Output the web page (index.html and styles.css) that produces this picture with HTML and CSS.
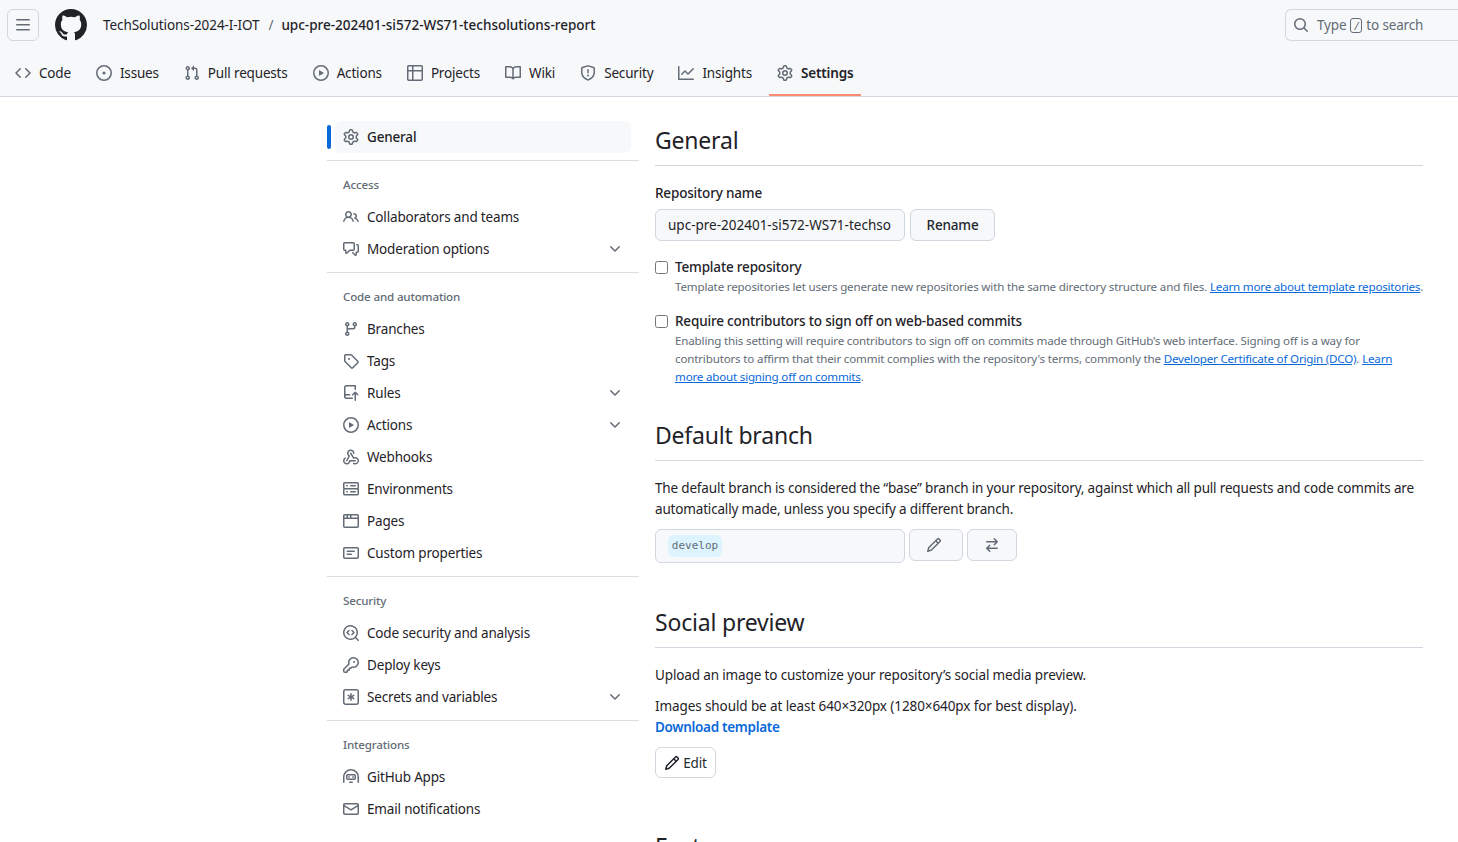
FILE: index.html
```html
<!DOCTYPE html>
<html lang="en">
<head>
<meta charset="utf-8">
<title>General settings</title>
<link rel="stylesheet" href="styles.css">
</head>
<body>
<svg class="defs" aria-hidden="true">
<symbol id="mark" viewBox="0 0 16 16"><path d="M8 0c4.42 0 8 3.58 8 8a8.013 8.013 0 0 1-5.45 7.59c-.4.08-.55-.17-.55-.38 0-.27.01-1.13.01-2.2 0-.75-.25-1.23-.54-1.48 1.78-.2 3.65-.88 3.65-3.95 0-.88-.31-1.59-.82-2.15.08-.2.36-1.02-.08-2.12 0 0-.67-.22-2.2.82-.64-.18-1.32-.27-2-.27-.68 0-1.36.09-2 .27-1.53-1.03-2.2-.82-2.2-.82-.44 1.1-.16 1.92-.08 2.12-.51.56-.82 1.28-.82 2.15 0 3.06 1.86 3.75 3.64 3.95-.23.2-.44.55-.51 1.07-.46.21-1.61.55-2.33-.66-.15-.24-.6-.83-1.23-.82-.67.01-.27.38.01.53.34.19.73.9.82 1.13.16.45.68 1.31 2.69.94 0 .67.01 1.3.01 1.49 0 .21-.15.45-.55.38A7.995 7.995 0 0 1 0 8c0-4.42 3.58-8 8-8Z"/></symbol>
<symbol id="bars" viewBox="0 0 16 16"><path d="M1 2.75A.75.75 0 0 1 1.75 2h12.5a.75.75 0 0 1 0 1.5H1.75A.75.75 0 0 1 1 2.75Zm0 5A.75.75 0 0 1 1.75 7h12.5a.75.75 0 0 1 0 1.5H1.75A.75.75 0 0 1 1 7.75ZM1.75 12h12.5a.75.75 0 0 1 0 1.5H1.75a.75.75 0 0 1 0-1.5Z"/></symbol>
<symbol id="code" viewBox="0 0 16 16"><path d="m11.28 3.22 4.25 4.25a.75.75 0 0 1 0 1.06l-4.25 4.25a.749.749 0 0 1-1.275-.326.749.749 0 0 1 .215-.734L13.94 8l-3.72-3.72a.749.749 0 0 1 .326-1.275.749.749 0 0 1 .734.215Zm-6.56 0a.751.751 0 0 1 1.042.018.751.751 0 0 1 .018 1.042L2.06 8l3.72 3.72a.749.749 0 0 1-.326 1.275.749.749 0 0 1-.734-.215L.47 8.53a.75.75 0 0 1 0-1.06Z"/></symbol>
<symbol id="issue" viewBox="0 0 16 16"><path d="M8 9.5a1.5 1.5 0 1 0 0-3 1.5 1.5 0 0 0 0 3Z"/><path d="M8 0a8 8 0 1 1 0 16A8 8 0 0 1 8 0ZM1.5 8a6.5 6.5 0 1 0 13 0 6.5 6.5 0 0 0-13 0Z"/></symbol>
<symbol id="pr" viewBox="0 0 16 16"><path d="M1.5 3.25a2.25 2.25 0 1 1 3 2.122v5.256a2.251 2.251 0 1 1-1.5 0V5.372A2.25 2.25 0 0 1 1.5 3.25Zm5.677-.177L9.573.677A.25.25 0 0 1 10 .854V2.5h1A2.5 2.5 0 0 1 13.5 5v5.628a2.251 2.251 0 1 1-1.5 0V5a1 1 0 0 0-1-1h-1v1.646a.25.25 0 0 1-.427.177L7.177 3.427a.25.25 0 0 1 0-.354ZM3.75 2.5a.75.75 0 1 0 0 1.5.75.75 0 0 0 0-1.5Zm0 9.5a.75.75 0 1 0 0 1.5.75.75 0 0 0 0-1.5Zm8.25.75a.75.75 0 1 0 1.5 0 .75.75 0 0 0-1.5 0Z"/></symbol>
<symbol id="play" viewBox="0 0 16 16"><path d="M8 0a8 8 0 1 1 0 16A8 8 0 0 1 8 0ZM1.5 8a6.5 6.5 0 1 0 13 0 6.5 6.5 0 0 0-13 0Zm4.879-2.773 4.264 2.559a.25.25 0 0 1 0 .428l-4.264 2.559A.25.25 0 0 1 6 10.559V5.442a.25.25 0 0 1 .379-.215Z"/></symbol>
<symbol id="table" viewBox="0 0 16 16"><path d="M0 1.75C0 .784.784 0 1.75 0h12.5C15.216 0 16 .784 16 1.75v12.5A1.75 1.75 0 0 1 14.25 16H1.75A1.75 1.75 0 0 1 0 14.25ZM6.5 6.5v8h7.75a.25.25 0 0 0 .25-.25V6.5Zm8-1.5V1.75a.25.25 0 0 0-.25-.25H6.5V5Zm-13 1.5v7.75c0 .138.112.25.25.25H5v-8ZM5 5V1.5H1.75a.25.25 0 0 0-.25.25V5Z"/></symbol>
<symbol id="book" viewBox="0 0 16 16"><path d="M0 1.75A.75.75 0 0 1 .75 1h4.253c1.227 0 2.317.59 3 1.501A3.743 3.743 0 0 1 11.006 1h4.245a.75.75 0 0 1 .75.75v10.5a.75.75 0 0 1-.75.75h-4.507a2.25 2.25 0 0 0-1.591.659l-.622.621a.75.75 0 0 1-1.06 0l-.622-.621A2.25 2.25 0 0 0 5.258 13H.75a.75.75 0 0 1-.75-.75Zm7.251 10.324.004-5.073-.002-2.253A2.25 2.25 0 0 0 5.003 2.5H1.5v9h3.757a3.75 3.75 0 0 1 1.994.574ZM8.755 4.75l-.004 7.322a3.752 3.752 0 0 1 1.992-.572H14.5v-9h-3.495a2.25 2.25 0 0 0-2.25 2.25Z"/></symbol>
<symbol id="shield" viewBox="0 0 16 16"><path d="M7.467.133a1.748 1.748 0 0 1 1.066 0l5.25 1.68A1.75 1.75 0 0 1 15 3.48V7c0 1.566-.32 3.182-1.303 4.682-.983 1.498-2.585 2.813-5.032 3.855a1.697 1.697 0 0 1-1.33 0c-2.447-1.042-4.049-2.357-5.032-3.855C1.32 10.182 1 8.566 1 7V3.48a1.75 1.75 0 0 1 1.217-1.667Zm.61 1.429a.25.25 0 0 0-.153 0l-5.25 1.68a.25.25 0 0 0-.174.238V7c0 1.358.275 2.666 1.057 3.86.784 1.194 2.121 2.34 4.366 3.297a.196.196 0 0 0 .154 0c2.245-.956 3.582-2.104 4.366-3.298C13.225 9.666 13.5 8.36 13.5 7V3.48a.251.251 0 0 0-.174-.237l-5.25-1.68ZM8.75 4.75v3a.75.75 0 0 1-1.5 0v-3a.75.75 0 0 1 1.5 0ZM9 10.5a1 1 0 1 1-2 0 1 1 0 0 1 2 0Z"/></symbol>
<symbol id="graph" viewBox="0 0 16 16"><path d="M1.5 1.75V13.5h13.75a.75.75 0 0 1 0 1.5H.75a.75.75 0 0 1-.75-.75V1.75a.75.75 0 0 1 1.5 0Zm14.28 2.53-5.25 5.25a.75.75 0 0 1-1.06 0L7 7.06 4.28 9.78a.751.751 0 0 1-1.042-.018.751.751 0 0 1-.018-1.042l3.25-3.25a.75.75 0 0 1 1.06 0L10 7.94l4.72-4.72a.751.751 0 0 1 1.042.018.751.751 0 0 1 .018 1.042Z"/></symbol>
<symbol id="gear" viewBox="0 0 16 16"><path d="M8 0a8.2 8.2 0 0 1 .701.031C9.444.095 9.99.645 10.16 1.29l.288 1.107c.018.066.079.158.212.224.231.114.454.243.668.386.123.082.233.09.299.071l1.103-.303c.644-.176 1.392.021 1.82.63.27.385.506.792.704 1.218.315.675.111 1.422-.364 1.891l-.814.806c-.049.048-.098.147-.088.294.016.257.016.515 0 .772-.01.147.038.246.088.294l.814.806c.475.469.679 1.216.364 1.891a7.977 7.977 0 0 1-.704 1.217c-.428.61-1.176.807-1.82.63l-1.102-.302c-.067-.019-.177-.011-.3.071a5.909 5.909 0 0 1-.668.386c-.133.066-.194.158-.211.224l-.29 1.106c-.168.646-.715 1.196-1.458 1.26a8.006 8.006 0 0 1-1.402 0c-.743-.064-1.289-.614-1.458-1.26l-.289-1.106c-.018-.066-.079-.158-.212-.224a5.738 5.738 0 0 1-.668-.386c-.123-.082-.233-.09-.299-.071l-1.103.303c-.644.176-1.392-.021-1.82-.63a8.12 8.12 0 0 1-.704-1.218c-.315-.675-.111-1.422.363-1.891l.815-.806c.05-.048.098-.147.088-.294a6.214 6.214 0 0 1 0-.772c.01-.147-.038-.246-.088-.294l-.815-.806C.635 6.045.431 5.298.746 4.623a7.92 7.92 0 0 1 .704-1.217c.428-.61 1.176-.807 1.82-.63l1.102.302c.067.019.177.011.3-.071.214-.143.437-.272.668-.386.133-.066.194-.158.211-.224l.29-1.106C6.009.645 6.556.095 7.299.03 7.53.01 7.764 0 8 0Zm-.571 1.525c-.036.003-.108.036-.137.146l-.289 1.105c-.147.561-.549.967-.998 1.189-.173.086-.34.183-.5.29-.417.278-.97.423-1.529.27l-1.103-.303c-.109-.03-.175.016-.195.045-.22.312-.412.644-.573.99-.014.031-.021.11.059.19l.815.806c.411.406.562.957.53 1.456a4.709 4.709 0 0 0 0 .582c.032.499-.119 1.05-.53 1.456l-.815.806c-.081.08-.073.159-.059.19.162.346.353.677.573.989.02.03.085.076.195.046l1.102-.303c.56-.153 1.113-.008 1.53.27.161.107.328.204.501.29.447.222.85.629.997 1.189l.289 1.105c.029.109.101.143.137.146a6.6 6.6 0 0 0 1.142 0c.036-.003.108-.036.137-.146l.289-1.105c.147-.561.549-.967.998-1.189.173-.086.34-.183.5-.29.417-.278.97-.423 1.529-.27l1.103.303c.109.029.175-.016.195-.045.22-.313.411-.644.573-.99.014-.031.021-.11-.059-.19l-.815-.806c-.411-.406-.562-.957-.53-1.456a4.709 4.709 0 0 0 0-.582c-.032-.499.119-1.05.53-1.456l.815-.806c.081-.08.073-.159.059-.19a6.464 6.464 0 0 0-.573-.989c-.02-.03-.085-.076-.195-.046l-1.102.303c-.56.153-1.113.008-1.53-.27a4.44 4.44 0 0 0-.501-.29c-.447-.222-.85-.629-.997-1.189l-.289-1.105c-.029-.11-.101-.143-.137-.146a6.6 6.6 0 0 0-1.142 0ZM11 8a3 3 0 1 1-6 0 3 3 0 0 1 6 0ZM9.5 8a1.5 1.5 0 1 0-3.001.001A1.5 1.5 0 0 0 9.5 8Z"/></symbol>
<symbol id="people" viewBox="0 0 16 16"><path d="M2 5.5a3.5 3.5 0 1 1 5.898 2.549 5.508 5.508 0 0 1 3.034 4.084.75.75 0 1 1-1.482.235 4 4 0 0 0-7.9 0 .75.75 0 0 1-1.482-.236A5.507 5.507 0 0 1 3.102 8.05 3.493 3.493 0 0 1 2 5.5ZM11 4a3.001 3.001 0 0 1 2.22 5.018 5.01 5.01 0 0 1 2.56 3.012.749.749 0 0 1-.885.954.752.752 0 0 1-.549-.514 3.507 3.507 0 0 0-2.522-2.372.75.75 0 0 1-.574-.73v-.352a.75.75 0 0 1 .416-.672A1.5 1.5 0 0 0 11 5.5.75.75 0 0 1 11 4Zm-5.5-.5a2 2 0 1 0-.001 3.999A2 2 0 0 0 5.5 3.5Z"/></symbol>
<symbol id="discussion" viewBox="0 0 16 16"><path d="M1.75 1h8.5c.966 0 1.75.784 1.75 1.75v5.5A1.75 1.75 0 0 1 10.25 10H7.061l-2.574 2.573A1.458 1.458 0 0 1 2 11.543V10h-.25A1.75 1.75 0 0 1 0 8.25v-5.5C0 1.784.784 1 1.75 1ZM1.5 2.75v5.5c0 .138.112.25.25.25h1a.75.75 0 0 1 .75.75v2.19l2.72-2.72a.749.749 0 0 1 .53-.22h3.5a.25.25 0 0 0 .25-.25v-5.5a.25.25 0 0 0-.25-.25h-8.5a.25.25 0 0 0-.25.25Zm13 2a.25.25 0 0 0-.25-.25h-.5a.75.75 0 0 1 0-1.5h.5c.966 0 1.75.784 1.75 1.75v5.5A1.75 1.75 0 0 1 14.25 12H14v1.543a1.458 1.458 0 0 1-2.487 1.03L9.22 12.28a.749.749 0 0 1 .326-1.275.749.749 0 0 1 .734.215l2.22 2.22v-2.19a.75.75 0 0 1 .75-.75h1a.25.25 0 0 0 .25-.25Z"/></symbol>
<symbol id="chev" viewBox="0 0 16 16"><path d="M12.78 5.22a.749.749 0 0 1 0 1.06l-4.25 4.25a.749.749 0 0 1-1.06 0L3.22 6.28a.749.749 0 1 1 1.06-1.06L8 8.939l3.72-3.719a.749.749 0 0 1 1.06 0Z"/></symbol>
<symbol id="branch" viewBox="0 0 16 16"><path d="M9.5 3.25a2.25 2.25 0 1 1 3 2.122V6A2.5 2.5 0 0 1 10 8.5H6a1 1 0 0 0-1 1v1.128a2.251 2.251 0 1 1-1.5 0V5.372a2.25 2.25 0 1 1 1.5 0v1.836A2.493 2.493 0 0 1 6 7h4a1 1 0 0 0 1-1v-.628A2.25 2.25 0 0 1 9.5 3.25Zm-6 0a.75.75 0 1 0 1.5 0 .75.75 0 0 0-1.5 0Zm8.25-.75a.75.75 0 1 0 0 1.5.75.75 0 0 0 0-1.5ZM4.25 12a.75.75 0 1 0 0 1.5.75.75 0 0 0 0-1.5Z"/></symbol>
<symbol id="tag" viewBox="0 0 16 16"><path d="M1 7.775V2.75C1 1.784 1.784 1 2.75 1h5.025c.464 0 .91.184 1.238.513l6.25 6.25a1.75 1.75 0 0 1 0 2.474l-5.026 5.026a1.75 1.75 0 0 1-2.474 0l-6.25-6.25A1.752 1.752 0 0 1 1 7.775Zm1.5 0c0 .066.026.13.073.177l6.25 6.25a.25.25 0 0 0 .354 0l5.025-5.025a.25.25 0 0 0 0-.354l-6.25-6.25a.25.25 0 0 0-.177-.073H2.75a.25.25 0 0 0-.25.25ZM6 5a1 1 0 1 1 0 2 1 1 0 0 1 0-2Z"/></symbol>
<symbol id="push" viewBox="0 0 16 16"><path d="M1 2.5A2.5 2.5 0 0 1 3.5 0h8.75a.75.75 0 0 1 .75.75v3.5a.75.75 0 0 1-1.5 0V1.5h-8a1 1 0 0 0-1 1v6.708A2.493 2.493 0 0 1 3.5 9h3.25a.75.75 0 0 1 0 1.5H3.5a1 1 0 0 0 0 2h5.75a.75.75 0 0 1 0 1.5H3.5A2.5 2.5 0 0 1 1 11.5Zm13.23 7.79h-.001l-1.224-1.224v6.184a.75.75 0 0 1-1.5 0V9.066L10.28 10.29a.75.75 0 0 1-1.06-1.061l2.505-2.504a.75.75 0 0 1 1.06 0L15.29 9.23a.751.751 0 0 1-.018 1.042.751.751 0 0 1-1.042.018Z"/></symbol>
<symbol id="webhook" viewBox="0 0 16 16"><path d="M5.5 4.25a2.25 2.25 0 0 1 4.5 0 .75.75 0 0 0 1.5 0 3.75 3.75 0 1 0-6.14 2.889l-2.272 4.258a.75.75 0 0 0 1.324.706L7 7.25a.75.75 0 0 0-.309-1.015A2.25 2.25 0 0 1 5.5 4.25Z"/><path d="M7.364 3.607a.75.75 0 0 1 1.03.257l2.608 4.349a3.75 3.75 0 1 1-.628 6.785.75.75 0 0 1 .752-1.299 2.25 2.25 0 1 0-.033-3.88.75.75 0 0 1-1.03-.256L7.107 4.636a.75.75 0 0 1 .257-1.03Z"/><path d="M2.9 8.776A.75.75 0 0 1 2.625 9.8 2.25 2.25 0 1 0 6 11.75a.75.75 0 0 1 .75-.751h5.5a.75.75 0 0 1 0 1.5H7.425a3.751 3.751 0 1 1-5.55-3.998.75.75 0 0 1 1.024.274Z"/></symbol>
<symbol id="server" viewBox="0 0 16 16"><path d="M1.75 1h12.5c.966 0 1.75.784 1.75 1.75v4c0 .372-.116.717-.314 1 .198.283.314.628.314 1v4a1.75 1.75 0 0 1-1.75 1.75H1.75A1.75 1.75 0 0 1 0 12.75v-4c0-.372.116-.717.314-1A1.739 1.739 0 0 1 0 6.75v-4C0 1.784.784 1 1.75 1ZM1.5 2.75v4c0 .138.112.25.25.25h12.5a.25.25 0 0 0 .25-.25v-4a.25.25 0 0 0-.25-.25H1.75a.25.25 0 0 0-.25.25Zm.25 5.75a.25.25 0 0 0-.25.25v4c0 .138.112.25.25.25h12.5a.25.25 0 0 0 .25-.25v-4a.25.25 0 0 0-.25-.25ZM7 4.75A.75.75 0 0 1 7.75 4h4.5a.75.75 0 0 1 0 1.5h-4.5A.75.75 0 0 1 7 4.75ZM7.75 10h4.5a.75.75 0 0 1 0 1.5h-4.5a.75.75 0 0 1 0-1.5ZM3 4.75A.75.75 0 0 1 3.75 4h.5a.75.75 0 0 1 0 1.5h-.5A.75.75 0 0 1 3 4.75ZM3.75 10h.5a.75.75 0 0 1 0 1.5h-.5a.75.75 0 0 1 0-1.5Z"/></symbol>
<symbol id="browser" viewBox="0 0 16 16"><path d="M0 2.75C0 1.784.784 1 1.75 1h12.5c.966 0 1.75.784 1.75 1.75v10.5A1.75 1.75 0 0 1 14.25 15H1.75A1.75 1.75 0 0 1 0 13.25ZM14.5 6h-13v7.25c0 .138.112.25.25.25h12.5a.25.25 0 0 0 .25-.25Zm-6-3.5v2h6v-1.75a.25.25 0 0 0-.25-.25ZM5 2.5v2h2v-2Zm-3.25 0a.25.25 0 0 0-.25.25V4.5h2v-2Z"/></symbol>
<symbol id="note" viewBox="0 0 16 16"><path d="M0 3.75C0 2.784.784 2 1.75 2h12.5c.966 0 1.75.784 1.75 1.75v8.5A1.75 1.75 0 0 1 14.25 14H1.75A1.75 1.75 0 0 1 0 12.25Zm1.75-.25a.25.25 0 0 0-.25.25v8.5c0 .138.112.25.25.25h12.5a.25.25 0 0 0 .25-.25v-8.5a.25.25 0 0 0-.25-.25ZM3.5 6.25a.75.75 0 0 1 .75-.75h7a.75.75 0 0 1 0 1.5h-7a.75.75 0 0 1-.75-.75Zm.75 2.25h4a.75.75 0 0 1 0 1.5h-4a.75.75 0 0 1 0-1.5Z"/></symbol>
<symbol id="codescan" viewBox="0 0 16 16"><path d="M8.47 4.97a.75.75 0 0 0 0 1.06L9.94 7.5 8.47 8.97a.75.75 0 1 0 1.06 1.06l2-2a.75.75 0 0 0 0-1.06l-2-2a.75.75 0 0 0-1.06 0ZM6.53 6.03a.75.75 0 0 0-1.06-1.06l-2 2a.75.75 0 0 0 0 1.06l2 2a.75.75 0 1 0 1.06-1.06L5.06 7.5l1.47-1.47Z"/><path d="M12.246 13.307a7.501 7.501 0 1 1 1.06-1.06l2.474 2.473a.749.749 0 0 1-.326 1.275.749.749 0 0 1-.734-.215ZM1.5 7.5a6.002 6.002 0 0 0 3.608 5.504 6.002 6.002 0 0 0 6.486-1.117.748.748 0 0 1 .292-.293A6 6 0 1 0 1.5 7.5Z"/></symbol>
<symbol id="key" viewBox="0 0 16 16"><path d="M10.5 0a5.499 5.499 0 1 1-1.288 10.848l-.932.932a.749.749 0 0 1-.53.22H7v.75a.749.749 0 0 1-.22.53l-.5.5a.749.749 0 0 1-.53.22H5v.75a.749.749 0 0 1-.22.53l-.5.5a.749.749 0 0 1-.53.22h-2A1.75 1.75 0 0 1 0 14.25v-2c0-.199.079-.389.22-.53l4.932-4.932A5.5 5.5 0 0 1 10.5 0Zm-4 5.5c-.001.431.069.86.205 1.269a.75.75 0 0 1-.181.768L1.5 12.56v1.69c0 .138.112.25.25.25h1.69l.06-.06v-1.19a.75.75 0 0 1 .75-.75h1.19l.06-.06v-1.19a.75.75 0 0 1 .75-.75h1.19l1.023-1.025a.75.75 0 0 1 .768-.18A4 4 0 1 0 6.5 5.5ZM11 6a1 1 0 1 1 0-2 1 1 0 0 1 0 2Z"/></symbol>
<symbol id="asterisk" viewBox="0 0 16 16"><path d="M0 2.75A2.75 2.75 0 0 1 2.75 0h10.5A2.75 2.75 0 0 1 16 2.75v10.5A2.75 2.75 0 0 1 13.25 16H2.75A2.75 2.75 0 0 1 0 13.25Zm2.75-1.25c-.69 0-1.25.56-1.25 1.25v10.5c0 .69.56 1.25 1.25 1.25h10.5c.69 0 1.25-.56 1.25-1.25V2.75c0-.69-.56-1.25-1.25-1.25ZM8 4a.75.75 0 0 1 .75.75V6.7l1.69-.975a.75.75 0 0 1 .75 1.3L9.5 8l1.69.976a.75.75 0 0 1-.75 1.298L8.75 9.299v1.951a.75.75 0 0 1-1.5 0V9.3l-1.69.975a.751.751 0 0 1-.75-1.3L6.5 8l-1.69-.975a.75.75 0 0 1 .75-1.3l1.69.976V4.75A.75.75 0 0 1 8 4Z"/></symbol>
<symbol id="hubot" viewBox="0 0 16 16"><path d="M0 8a8 8 0 0 1 16 0v5.25a.75.75 0 0 1-1.5 0V8a6.5 6.5 0 1 0-13 0v5.25a.75.75 0 0 1-1.5 0Z"/><path d="M4.75 5h6.5C12.216 5 13 5.784 13 6.75v2.5A1.75 1.75 0 0 1 11.25 11h-6.5A1.75 1.75 0 0 1 3 9.25v-2.5C3 5.784 3.784 5 4.75 5Zm0 1.5a.25.25 0 0 0-.25.25v2.5c0 .138.112.25.25.25h6.5a.25.25 0 0 0 .25-.25v-2.5a.25.25 0 0 0-.25-.25ZM6 7a.75.75 0 0 1 .75.75v.5a.75.75 0 0 1-1.5 0v-.5A.75.75 0 0 1 6 7Zm4 0a.75.75 0 0 1 .75.75v.5a.75.75 0 0 1-1.5 0v-.5A.75.75 0 0 1 10 7ZM6.75 12.5h2.5a.75.75 0 0 1 0 1.5h-2.5a.75.75 0 0 1 0-1.5Z"/></symbol>
<symbol id="mail" viewBox="0 0 16 16"><path d="M1.75 2h12.5c.966 0 1.75.784 1.75 1.75v8.5A1.75 1.75 0 0 1 14.25 14H1.75A1.75 1.75 0 0 1 0 12.25v-8.5C0 2.784.784 2 1.75 2ZM1.5 12.251c0 .138.112.25.25.25h12.5a.25.25 0 0 0 .25-.25V5.809L8.38 9.397a.75.75 0 0 1-.76 0L1.5 5.809v6.442Zm13-8.181v-.32a.25.25 0 0 0-.25-.25H1.75a.25.25 0 0 0-.25.25v.32L8 7.88Z"/></symbol>
<symbol id="pencil" viewBox="0 0 16 16"><path d="M11.013 1.427a1.75 1.75 0 0 1 2.474 0l1.086 1.086a1.75 1.75 0 0 1 0 2.474l-8.61 8.61c-.21.21-.47.364-.756.445l-3.251.93a.75.75 0 0 1-.927-.928l.929-3.25c.081-.286.235-.547.445-.758l8.61-8.61Zm.176 4.823L9.75 4.81l-6.286 6.287a.253.253 0 0 0-.064.108l-.558 1.953 1.953-.558a.253.253 0 0 0 .108-.064Zm1.238-3.763a.25.25 0 0 0-.354 0L10.811 3.75l1.439 1.44 1.263-1.263a.25.25 0 0 0 0-.354Z"/></symbol>
<symbol id="switch" viewBox="0 0 16 16"><path d="M5.22 14.78a.75.75 0 0 0 1.06-1.06L4.56 12h8.69a.75.75 0 0 0 0-1.5H4.56l1.72-1.72a.75.75 0 0 0-1.06-1.06l-3 3a.75.75 0 0 0 0 1.06l3 3Zm5.56-6.5a.75.75 0 1 1-1.06-1.06l1.72-1.72H2.75a.75.75 0 0 1 0-1.5h8.69L9.72 2.28a.75.75 0 0 1 1.06-1.06l3 3a.75.75 0 0 1 0 1.06l-3 3Z"/></symbol>
<symbol id="search" viewBox="0 0 16 16"><path d="M10.68 11.74a6 6 0 0 1-7.922-8.982 6 6 0 0 1 8.982 7.922l3.04 3.04a.749.749 0 0 1-.326 1.275.749.749 0 0 1-.734-.215ZM11.5 7a4.499 4.499 0 1 0-8.997 0A4.499 4.499 0 0 0 11.5 7Z"/></symbol>
</svg>

<header class="header">
  <div class="topbar">
    <button class="menu-btn"><svg class="oi"><use href="#bars"/></svg></button>
    <svg class="logo"><use href="#mark"/></svg>
    <a class="crumb">TechSolutions-2024-I-IOT</a>
    <span class="crumb-sep">/</span>
    <a class="crumb crumb-repo">upc-pre-202401-si572-WS71-techsolutions-report</a>
    <div class="search">
      <svg class="oi"><use href="#search"/></svg>
      <span class="search-text">Type <kbd class="slash">/</kbd> to search</span>
    </div>
  </div>
  <nav class="tabs">
    <a class="tab"><svg class="oi"><use href="#code"/></svg>Code</a>
    <a class="tab"><svg class="oi"><use href="#issue"/></svg>Issues</a>
    <a class="tab"><svg class="oi"><use href="#pr"/></svg>Pull requests</a>
    <a class="tab"><svg class="oi"><use href="#play"/></svg>Actions</a>
    <a class="tab"><svg class="oi"><use href="#table"/></svg>Projects</a>
    <a class="tab"><svg class="oi"><use href="#book"/></svg>Wiki</a>
    <a class="tab"><svg class="oi"><use href="#shield"/></svg>Security</a>
    <a class="tab"><svg class="oi"><use href="#graph"/></svg>Insights</a>
    <a class="tab tab-active"><svg class="oi"><use href="#gear"/></svg>Settings</a>
  </nav>
</header>

<div class="page">
  <aside class="side">
    <a class="item item-active"><svg class="oi"><use href="#gear"/></svg>General</a>
    <div class="group">
      <h3 class="group-title">Access</h3>
      <a class="item"><svg class="oi"><use href="#people"/></svg>Collaborators and teams</a>
      <a class="item"><svg class="oi"><use href="#discussion"/></svg>Moderation options<svg class="oi chev"><use href="#chev"/></svg></a>
    </div>
    <div class="group">
      <h3 class="group-title">Code and automation</h3>
      <a class="item"><svg class="oi"><use href="#branch"/></svg>Branches</a>
      <a class="item"><svg class="oi"><use href="#tag"/></svg>Tags</a>
      <a class="item"><svg class="oi"><use href="#push"/></svg>Rules<svg class="oi chev"><use href="#chev"/></svg></a>
      <a class="item"><svg class="oi"><use href="#play"/></svg>Actions<svg class="oi chev"><use href="#chev"/></svg></a>
      <a class="item"><svg class="oi"><use href="#webhook"/></svg>Webhooks</a>
      <a class="item"><svg class="oi"><use href="#server"/></svg>Environments</a>
      <a class="item"><svg class="oi"><use href="#browser"/></svg>Pages</a>
      <a class="item"><svg class="oi"><use href="#note"/></svg>Custom properties</a>
    </div>
    <div class="group">
      <h3 class="group-title">Security</h3>
      <a class="item"><svg class="oi"><use href="#codescan"/></svg>Code security and analysis</a>
      <a class="item"><svg class="oi"><use href="#key"/></svg>Deploy keys</a>
      <a class="item"><svg class="oi"><use href="#asterisk"/></svg>Secrets and variables<svg class="oi chev"><use href="#chev"/></svg></a>
    </div>
    <div class="group">
      <h3 class="group-title">Integrations</h3>
      <a class="item"><svg class="oi"><use href="#hubot"/></svg>GitHub Apps</a>
      <a class="item"><svg class="oi"><use href="#mail"/></svg>Email notifications</a>
    </div>
  </aside>

  <main class="main">
    <h2 class="subhead">General</h2>
    <label class="label">Repository name</label>
    <div class="name-row">
      <div class="field">upc-pre-202401-si572-WS71-techso</div>
      <button class="btn btn-rename">Rename</button>
    </div>
    <div class="check check-first">
      <input type="checkbox" class="box">
      <div>
        <div class="check-title">Template repository</div>
        <p class="note note-wide">Template repositories let users generate new repositories with the same directory structure and files. <a class="link">Learn more about template repositories</a>.</p>
      </div>
    </div>
    <div class="check">
      <input type="checkbox" class="box">
      <div>
        <div class="check-title">Require contributors to sign off on web-based commits</div>
        <p class="note note-signoff">Enabling this setting will require contributors to sign off on commits made through GitHub’s web interface. Signing off is a way for contributors to affirm that their commit complies with the repository's terms, commonly the <a class="link">Developer Certificate of Origin (DCO)</a>. <a class="link">Learn more about signing off on commits</a>.</p>
      </div>
    </div>

    <h2 class="subhead subhead-branch">Default branch</h2>
    <p class="para para-branch">The default branch is considered the “base” branch in your repository, against which all pull requests and code commits are automatically made, unless you specify a different branch.</p>
    <div class="branch-row">
      <div class="branch-box"><code class="branch-name">develop</code></div>
      <button class="btn btn-icon btn-pencil"><svg class="oi"><use href="#pencil"/></svg></button>
      <button class="btn btn-icon btn-switch"><svg class="oi"><use href="#switch"/></svg></button>
    </div>

    <h2 class="subhead subhead-social">Social preview</h2>
    <p class="para para-upload">Upload an image to customize your repository’s social media preview.</p>
    <p class="para para-size">Images should be at least 640×320px (1280×640px for best display).<br><a class="download">Download template</a></p>
    <button class="btn btn-edit"><svg class="oi"><use href="#pencil"/></svg>Edit</button>

    <h2 class="subhead subhead-features">Features</h2>
  </main>
</div>
</body>
</html>
```
FILE: styles.css
```css
* { box-sizing: border-box; }
html, body { margin: 0; height: 842px; overflow: hidden; background: #fff; }
body { font: 13.5px/21px "Noto Sans", "Open Sans", sans-serif; color: #1f2328; letter-spacing: -0.17px; }
.defs { display: none; }
.oi { width: 16px; height: 16px; fill: #636c76; flex: none; display: block; }
h2, h3, p { margin: 0; font-weight: 400; }

.header { height: 97px; background: #f6f8fa; border-bottom: 1px solid #d0d7de; }
.topbar { display: flex; align-items: center; height: 50px; padding: 9px 0 9px 7px; }
.menu-btn { width: 32px; height: 32px; display: flex; align-items: center; justify-content: center; padding: 0; background: #f6f8fa; border: 1px solid #d0d7de; border-radius: 6px; }
.logo { width: 32px; height: 32px; fill: #1f2328; margin: 0 16px; }
.crumb { color: #1f2328; letter-spacing: -0.08px; }
.crumb-sep { color: #636c76; margin: 0 8px 0 9px; }
.crumb-repo { font-weight: 500; letter-spacing: 0; }
.search { margin-left: auto; width: 173px; height: 32px; display: flex; align-items: center; gap: 8px; padding-left: 7px; border: 1px solid #d0d7de; border-right: 0; border-radius: 6px 0 0 6px; color: #636c76; }
.search-text { display: flex; align-items: center; gap: 4px; }
.slash { width: 12px; height: 15px; border: 1px solid #636c76; border-radius: 3px; font: 11px/13px "Noto Sans", sans-serif; font-style: italic; text-align: center; }

.tabs { display: flex; gap: 9px; height: 46px; padding-left: 7px; }
.tab { display: flex; align-items: center; gap: 8px; height: 46px; padding: 0 8px 0; position: relative; }
.tab-active { font-weight: 600; }
.tab-active::after { content: ""; position: absolute; left: 0; right: 0; bottom: 0; height: 2px; background: #fd8c73; }

.page { display: flex; gap: 16px; padding: 24px 35px 0 327px; }
.side { width: 312px; flex: none; }
.item { display: flex; align-items: center; gap: 8px; height: 32px; margin-left: 8px; margin-right: 8px; padding: 0 8px; border-radius: 6px; position: relative; }
.item-active { background: #f6f8fa; font-weight: 500; }
.item-active::before { content: ""; position: absolute; left: -8px; top: 4px; width: 4px; height: 24px; border-radius: 6px; background: #0969da; }
.chev { margin-left: auto; }
.group { margin-top: 7px; padding-top: 8px; border-top: 1px solid #d8dee4; }
.group-title { height: 32px; padding-left: 16px; font-size: 11.6px; line-height: 32px; font-weight: 500; color: #636c76; }

.main { width: 768px; flex: none; }
.subhead { font-size: 23px; letter-spacing: -0.2px; line-height: 39px; height: 45px; padding-bottom: 5px; border-bottom: 1px solid #d0d7de; }
.label { display: block; margin-top: 17px; font-weight: 500; }
.name-row { display: flex; gap: 5px; margin-top: 5px; }
.field { width: 250px; height: 32px; padding: 0 12px; line-height: 30px; letter-spacing: 0; background: #f6f8fa; border: 1px solid #d0d7de; border-radius: 6px; white-space: nowrap; overflow: hidden; }
.btn { display: flex; align-items: center; justify-content: center; height: 32px; padding: 0 16px; font: inherit; letter-spacing: inherit; color: #24292f; background: #f6f8fa; border: 1px solid #d0d7de; border-radius: 6px; }
.btn-rename { width: 85px; font-weight: 500; }
.check { display: flex; gap: 7px; margin-top: 15px; }
.check-first { margin-top: 16px; }
.box { width: 13px; height: 13px; margin: 4px 0 0; flex: none; }
.check-title { font-weight: 500; line-height: 20px; }
.note { font-size: 11.6px; letter-spacing: -0.17px; line-height: 18px; color: #636c76; margin-top: 1px; }
.note-wide { margin-right: -3px; }
.note-signoff { margin-right: 8px; }
.link { color: #0969da; text-decoration: underline; letter-spacing: -0.2px; }
.subhead-branch { margin-top: 30px; }
.para-branch { margin-top: 17px; }
.branch-row { display: flex; gap: 4px; margin-top: 9px; }
.branch-box { width: 250px; height: 34px; padding: 5px 12px; background: #f6f8fa; border: 1px solid #d0d7de; border-radius: 6px; }
.branch-name { display: block; width: 54px; height: 22px; text-align: center; font: 11px/21px "DejaVu Sans Mono", "Liberation Mono", monospace; letter-spacing: 0; color: #636c76; background: #ddf4ff; border-radius: 6px; }
.btn-icon { padding: 0; }
.btn-pencil { width: 54px; padding-right: 4px; }
.btn-switch { width: 50px; }
.subhead-social { margin-top: 40px; }
.para-upload { margin-top: 17px; letter-spacing: -0.14px; }
.para-size { margin-top: 10px; letter-spacing: -0.1px; }
.download { color: #0969da; font-weight: 600; letter-spacing: -0.3px; }
.btn-edit { width: 61px; height: 31px; gap: 3px; padding: 1px 0 0; margin-top: 9px; background: #fff; font-weight: 400; }
.btn-edit .oi { fill: #1f2328; }
.subhead-features { margin-top: 49px; }
```
